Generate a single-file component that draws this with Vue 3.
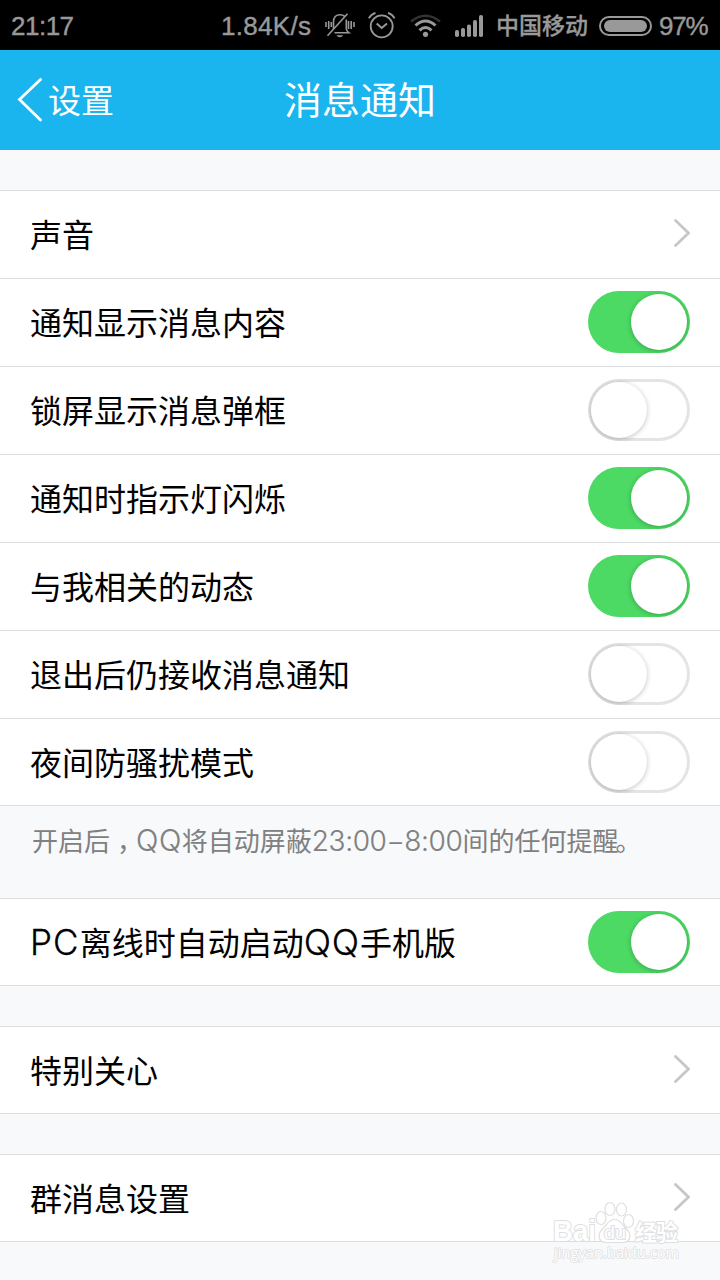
<script setup>
import { reactive } from 'vue'

const groups = reactive([
  {
    rows: [
      { parts: ['声音'], type: 'link' },
      { parts: ['通知显示消息内容'], type: 'switch', on: true },
      { parts: ['锁屏显示消息弹框'], type: 'switch', on: false },
      { parts: ['通知时指示灯闪烁'], type: 'switch', on: true },
      { parts: ['与我相关的动态'], type: 'switch', on: true },
      { parts: ['退出后仍接收消息通知'], type: 'switch', on: false },
      { parts: ['夜间防骚扰模式'], type: 'switch', on: false }
    ],
    note: true
  },
  { rows: [{ parts: ['PC', '离线时自动启动', 'QQ', '手机版'], type: 'switch', on: true }] },
  { rows: [{ parts: ['特别关心'], type: 'link' }] },
  { rows: [{ parts: ['群消息设置'], type: 'link' }] }
])

const isLatin = (s) => /^[A-Z]+$/.test(s)
</script>

<template>
  <div class="screen">
    <div class="status">
      <span class="clock">21:17</span>
      <span class="speed">1.84K/s</span>
      <svg width="31" height="28" viewBox="0 0 31 28" fill="none" stroke="#999" stroke-width="1.6">
        <path d="M1 10v5M3.700 9v8M6.300 10v5M23.500 9v8M26.200 9v8M29 10v5" />
        <path d="M8.500 17V10C8.500 5 11 2.800 15 2.800c2 0 3.600.6 4.600 1.600M21.300 7.500v9c0 1.800.9 3 2.700 4.300H9.500" />
        <path d="M22.500 1.800 2.500 23.700" />
        <path d="M11.500 23.300h6.500c-1 2.500-5.500 2.500-6.500 0z" fill="#999" stroke="none" />
      </svg>
      <svg width="28" height="28" viewBox="0 0 28 28" fill="none" stroke="#999" stroke-width="1.8">
        <circle cx="13.700" cy="14.300" r="11" />
        <path d="M.8 6.300Q3 2.300 7.500 .8M20 .8Q24.500 2.300 26.600 6.300" />
        <path d="m8.700 11.500 5 4.500 5.300-4.500" stroke-width="2" />
      </svg>
      <svg width="31" height="28" viewBox="0 0 31 28" fill="none" stroke-width="3">
        <path d="M1 9.500Q15.500-2 30 9.500" stroke="#333" stroke-width="2.500" />
        <path d="M5.500 13.500Q15.500 4.500 25.500 13.500M9.500 18.300Q15.500 12.800 21.500 18.300" stroke="#999" />
        <circle cx="15.500" cy="22.300" r="2.600" fill="#999" />
      </svg>
      <svg width="30" height="28" viewBox="0 0 30 28" fill="#999">
        <rect x="1" y="18" width="4" height="7" rx="1.800" />
        <rect x="7" y="16" width="4" height="9" rx="1.800" />
        <rect x="13" y="12.500" width="4" height="12.500" rx="1.800" />
        <rect x="19" y="8" width="4" height="17" rx="1.800" />
        <rect x="25" y="3" width="4" height="22" rx="1.800" />
      </svg>
      <span class="carrier">中国移动</span>
      <span class="battery"><i></i></span>
      <span class="percent">97%</span>
    </div>

    <header class="bar">
      <div class="back">
        <svg width="27" height="46" viewBox="0 0 27 46" fill="none" stroke="#fff" stroke-width="2.800" stroke-linecap="round">
          <path d="M24.500 2.500 3.500 22.500l21 20.500" />
        </svg>
        <span>设置</span>
      </div>
      <h1>消息通知</h1>
    </header>

    <main>
      <template v-for="(group, g) in groups" :key="g">
        <section class="group">
          <div v-for="row in group.rows" :key="row.parts[0]" class="row" @click="row.on = !row.on">
            <span class="label"><span v-for="(p, i) in row.parts" :key="i" :class="{ latin: isLatin(p), q: p === 'QQ' }">{{ p }}</span></span>
            <span v-if="row.type === 'switch'" class="switch" :class="{ on: row.on }"><span class="knob"></span></span>
            <svg v-else class="chevron" width="20" height="32" viewBox="0 0 20 32" fill="none" stroke="#c7c7c7" stroke-width="2.800" stroke-linecap="round">
              <path d="M5.500 3.500 18.500 16 5.500 28.500" />
            </svg>
          </div>
        </section>
        <p v-if="group.note" class="note">开启后<span class="comma">，</span><span class="nq">QQ</span>将自动屏蔽<span class="time">23:00−8:00</span>间的任何提醒<span class="stop">。</span></p>
      </template>
    </main>

    <svg class="watermark" width="136" height="68" viewBox="0 0 136 68">
      <g fill="#fff" stroke="#dedfe1" stroke-width="1.200">
        <ellipse cx="50" cy="19" rx="5" ry="6.500" />
        <ellipse cx="59" cy="10" rx="5" ry="6.500" />
        <ellipse cx="70.500" cy="10.500" rx="5" ry="6.500" />
        <ellipse cx="77.500" cy="22" rx="5" ry="6.500" />
        <path d="M63.500 20.500c-6 0-7.500 5-11.500 9-6 5-5 14 3 14h17c8 0 9-9 3-14-4-4-5.500-9-11.500-9z" />
      </g>
      <g fill="#fff" stroke="#dedfe1" stroke-width="2" paint-order="stroke" stroke-linejoin="round">
        <text x="2" y="42" class="wm-bold" font-size="29" textLength="43" lengthAdjust="spacingAndGlyphs">Bai</text>
        <text x="53" y="40" class="wm-du" font-size="19" textLength="22" lengthAdjust="spacingAndGlyphs">du</text>
        <text x="84" y="41" class="wm-cjk" font-size="22" textLength="43">经验</text>
        <text x="3" y="59" class="wm-url" font-size="14.500" textLength="125" stroke-width="1.600">jingyan.baidu.com</text>
      </g>
    </svg>
  </div>
</template>

<style>
body {
  margin: 0;
  background: #f8f9fb;
}
</style>

<style scoped>
.screen {
  position: relative;
  width: 720px;
  height: 1280px;
  overflow: hidden;
  background: #f8f9fb;
  font-family: "Noto Sans CJK SC", sans-serif;
  color: #000;
}
.status {
  box-sizing: border-box;
  height: 50px;
  padding-left: 11px;
  background: #000;
  color: #999;
  display: grid;
  grid-template-columns: 210px 104px 43px 42px 44px 42px 103px 60px 61px;
  align-items: center;
  font: 26px/50px "Liberation Sans", sans-serif;
  white-space: nowrap;
}
.status svg {
  display: block;
}
.clock,
.speed,
.percent {
  padding-top: 1px;
  height: 49px;
  line-height: 49px;
  -webkit-text-stroke: 0.4px #999;
}
.clock {
  letter-spacing: -0.5px;
}
.speed {
  letter-spacing: 0.3px;
}
.percent {
  letter-spacing: -1.2px;
}
.carrier {
  font: 500 23px/48px "Noto Sans CJK SC", sans-serif;
  height: 52px;
  -webkit-text-stroke: 0.3px #999;
}
.battery {
  box-sizing: border-box;
  width: 53px;
  height: 20px;
  border: 2px solid #999;
  border-radius: 10px;
  padding: 2px 3px;
}
.battery i {
  display: block;
  height: 12px;
  width: 43px;
  border-radius: 6px;
  background: #999;
}
.bar {
  height: 100px;
  background: #1ab4ee;
  color: #fff;
  display: grid;
  grid-template-columns: 1fr auto 1fr;
  align-items: center;
}
.back {
  display: flex;
  align-items: center;
  padding-left: 16px;
  font-size: 33px;
  line-height: 46px;
}
.back span {
  margin-left: 5px;
  padding-bottom: 2px;
}
h1 {
  margin: 0;
  padding-bottom: 4px;
  font-size: 38px;
  font-weight: 400;
  line-height: 54px;
}
main {
  padding-top: 40px;
}
.group {
  margin-bottom: 40px;
  background: #fff;
}
.row {
  box-sizing: border-box;
  height: 88px;
  border-top: 1px solid #dcddde;
  padding: 0 30px;
  display: flex;
  justify-content: space-between;
  align-items: flex-start;
}
.row:last-child {
  border-bottom: 1px solid #dcddde;
}
.label {
  font-size: 32px;
  line-height: 84px;
  height: 84px;
  white-space: nowrap;
}
.latin {
  font-family: Inter, sans-serif;
  font-weight: 300;
  font-size: 35px;
  line-height: 1;
  letter-spacing: 1.1px;
  -webkit-text-stroke: 0.3px #000;
}
.latin.q {
  font-size: 36px;
  letter-spacing: 0.8px;
}
.switch {
  position: relative;
  width: 102px;
  height: 62px;
  margin-top: 12px;
  border-radius: 31px;
  background: #fff;
  box-shadow: inset 0 0 0 3px #e4e4e4;
  overflow: hidden;
}
.knob {
  position: absolute;
  top: 3px;
  left: 3px;
  width: 56px;
  height: 56px;
  border-radius: 50%;
  background: #fff;
  box-shadow: 0 1px 5px rgba(0, 0, 0, 0.25);
}
.switch.on {
  background: #4cd964;
  box-shadow: none;
}
.switch.on .knob {
  left: 43px;
}
.chevron {
  margin-top: 26px;
}
.note {
  margin: -40px 0 0;
  height: 92px;
  padding-left: 32px;
  font-size: 26px;
  line-height: 68px;
  color: #808080;
  white-space: nowrap;
}
.comma {
  display: inline-block;
  box-sizing: border-box;
  width: 26px;
  height: 30px;
  line-height: 30px;
  text-indent: 7px;
}
.nq,
.time {
  font-family: Inter, sans-serif;
  font-weight: 300;
  font-size: 28px;
  line-height: 1;
  -webkit-text-stroke: 0.2px #808080;
}
.nq {
  font-size: 29.5px;
  letter-spacing: 0.5px;
}
.time {
  letter-spacing: -0.4px;
}
.stop {
  margin-left: -3px;
}
.watermark {
  position: absolute;
  left: 551px;
  top: 1199px;
}
.wm-bold {
  font-family: "Liberation Sans", sans-serif;
  font-weight: 700;
}
.wm-du {
  font-family: "Liberation Sans", sans-serif;
  font-weight: 400;
}
.wm-cjk {
  font-family: "Noto Sans CJK SC", sans-serif;
  font-weight: 700;
}
.wm-url {
  font-family: "Open Sans", sans-serif;
}
</style>
